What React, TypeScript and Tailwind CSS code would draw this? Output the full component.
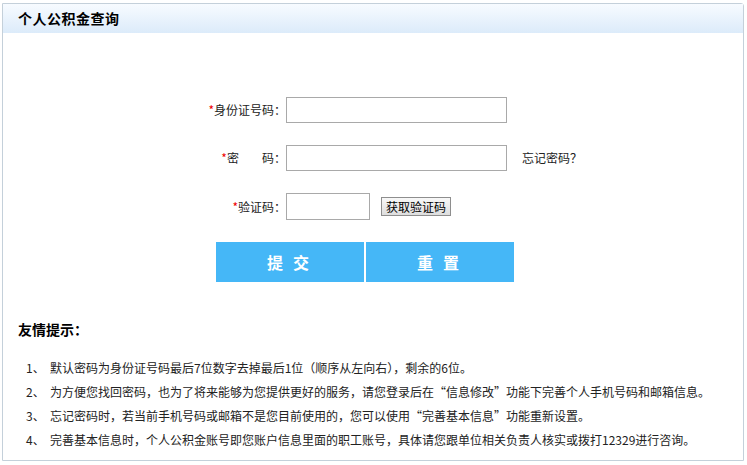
export default function App() {
  const tips = [
    "默认密码为身份证号码最后7位数字去掉最后1位（顺序从左向右），剩余的6位。",
    "为方便您找回密码，也为了将来能够为您提供更好的服务，请您登录后在“信息修改”功能下完善个人手机号码和邮箱信息。",
    "忘记密码时，若当前手机号码或邮箱不是您目前使用的，您可以使用“完善基本信息”功能重新设置。",
    "完善基本信息时，个人公积金账号即您账户信息里面的职工账号，具体请您跟单位相关负责人核实或拨打12329进行咨询。",
  ]

  return (
    <div
      className="w-[747px] h-[465px] bg-white pt-[3px] pl-[2px] text-[#222]"
      style={{ fontFamily: '"Noto Sans CJK SC", "Liberation Sans", sans-serif' }}
    >
      <div className="w-[742px] h-[458px] border border-[#c4d0da] rounded-tr-[3px]">
        {/* header */}
        <div className="h-[29px] bg-gradient-to-b from-[#f7fbff] to-[#dcebfa] flex items-center pl-[15px]">
          <span className="text-[14px] font-bold text-black tracking-[0.5px]">个人公积金查询</span>
        </div>

        {/* form */}
        <div className="pt-[64px] text-[12px]">
          <div className="flex items-center h-[26px]">
            <label className="w-[283px] text-right">
              <span className="text-[#e00]">*</span>身份证号码：
            </label>
            <input className="w-[221px] h-[26px] border border-[#a9a9a9] outline-none" />
          </div>

          <div className="flex items-center h-[26px] mt-[22px]">
            <label className="w-[283px] text-right">
              <span className="text-[#e00]">*</span>密<span className="inline-block w-[23px]" />码：
            </label>
            <input type="password" className="w-[221px] h-[26px] border border-[#a9a9a9] outline-none" />
            <span className="ml-[15px]">忘记密码？</span>
          </div>

          <div className="flex items-center h-[27px] mt-[22px]">
            <label className="w-[283px] text-right">
              <span className="text-[#e00]">*</span>验证码：
            </label>
            <input className="w-[84px] h-[27px] border border-[#a9a9a9] outline-none" />
            <button className="ml-[11px] w-[70px] h-[19px] border border-[#8e8e8e] bg-gradient-to-b from-[#f8f8f8] to-[#dedede] text-[12px] leading-none text-black">
              获取验证码
            </button>
          </div>

          <div className="flex gap-[2px] pl-[213px] mt-[22px]">
            <button className="w-[148px] h-[40px] bg-[#45b7f7] text-white text-[16px] font-bold tracking-[10px] pl-[6px]">
              提交
            </button>
            <button className="w-[148px] h-[40px] bg-[#45b7f7] text-white text-[16px] font-bold tracking-[10px] pl-[6px]">
              重置
            </button>
          </div>
        </div>

        {/* tips */}
        <div className="pl-[15px] pt-[37px]">
          <div className="text-[14px] font-bold text-black">友情提示：</div>
          <ul className="mt-[16px] text-[12px]">
            {tips.map((t, i) => (
              <li key={i} className="flex h-[24px] items-center">
                <span className="w-[32px] pl-[8px]">{i + 1}、</span>
                <span>{t}</span>
              </li>
            ))}
          </ul>
        </div>
      </div>
    </div>
  )
}
